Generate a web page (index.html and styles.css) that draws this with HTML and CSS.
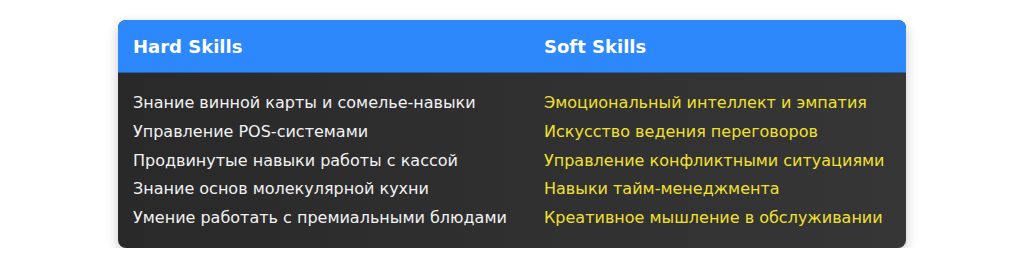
FILE: index.html
```html
<!DOCTYPE html>
<html lang="ru">
<head>
<meta charset="utf-8">
<link rel="stylesheet" href="styles.css">
</head>
<body>
<div class="card">
  <div class="head">
    <div class="cell">Hard Skills</div>
    <div class="cell">Soft Skills</div>
  </div>
  <div class="body">
    <ul class="list hard">
      <li>Знание винной карты и сомелье-навыки</li>
      <li>Управление POS-системами</li>
      <li>Продвинутые навыки работы с кассой</li>
      <li>Знание основ молекулярной кухни</li>
      <li>Умение работать с премиальными блюдами</li>
    </ul>
    <ul class="list soft">
      <li>Эмоциональный интеллект и эмпатия</li>
      <li>Искусство ведения переговоров</li>
      <li>Управление конфликтными ситуациями</li>
      <li>Навыки тайм-менеджмента</li>
      <li>Креативное мышление в обслуживании</li>
    </ul>
  </div>
</div>
</body>
</html>
```
FILE: styles.css
```css
html, body {
  margin: 0;
  padding: 0;
  background: #ffffff;
}
body {
  padding-top: 20px;
  font-family: "DejaVu Sans", sans-serif;
}
.card {
  width: 788px;
  margin: 0 auto;
  border-radius: 8px;
  overflow: hidden;
  box-shadow: 0 4px 12px rgba(0, 0, 0, 0.22);
  background: linear-gradient(to right, #292929, #363636);
}
.head {
  display: grid;
  grid-template-columns: 411px 1fr;
  background: #2d88fb;
  height: 53px;
  box-sizing: border-box;
  border-bottom: 1px solid #255fa8;
}
.head .cell {
  padding: 15px;
  color: #ffffff;
  font-weight: bold;
  font-size: 18px;
  line-height: 23px;
}
.body {
  display: grid;
  grid-template-columns: 411px 1fr;
  padding: 16px 0 15px;
}
.list {
  list-style: none;
  margin: 0;
  padding: 0 15px;
  font-size: 16px;
  line-height: 18.75px;
}
.list li {
  padding: 5px 0;
  white-space: nowrap;
}
.hard { color: #f2f2f2; }
.soft { color: #f0e030; }
```
